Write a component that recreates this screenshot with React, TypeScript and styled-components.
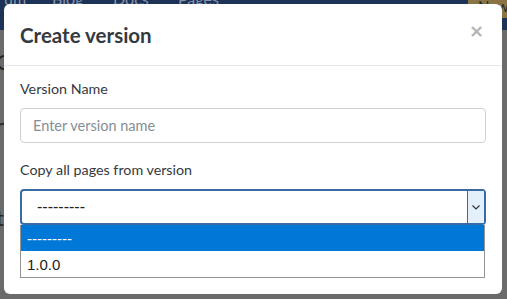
import React from "react";
import styled, { createGlobalStyle } from "styled-components";

const Global = createGlobalStyle`
  html, body { margin: 0; padding: 0; }
  body {
    width: 507px;
    height: 299px;
    overflow: hidden;
    background: #6b6b6b;
    font-family: Lato, "Open Sans", sans-serif;
  }
`;

const Page = styled.div`
  position: relative;
  width: 507px;
  height: 299px;
  background: #6b6b6b;
  overflow: hidden;
`;

const Navbar = styled.div`
  height: 30px;
  background: #1d3257;
  display: flex;
  align-items: flex-start;
  overflow: hidden;
`;

const NavLink = styled.span<{ $w: number }>`
  width: ${(p) => p.$w}px;
  flex: none;
  margin-top: -11px;
  font-size: 16px;
  line-height: 20px;
  color: #8794aa;
`;

const NavSpacer = styled.div`
  flex: 1;
`;

const NewButton = styled.div`
  width: 39px;
  height: 18px;
  box-sizing: border-box;
  background: #8a7446;
  color: #2a2a2a;
  font-size: 15px;
  line-height: 12px;
  overflow: hidden;
  white-space: nowrap;
  padding-left: 10px;
`;

const PageBody = styled.div`
  display: flex;
  flex-direction: column;
  font-size: 22px;
  color: #262626;
  margin-left: -4px;
`;

const PageLine = styled.div<{ $h: number }>`
  height: ${(p) => p.$h}px;
  line-height: ${(p) => p.$h}px;
`;

const Modal = styled.div`
  position: absolute;
  left: 4px;
  top: 4px;
  width: 498px;
  height: 290px;
  background: #fff;
  border-radius: 6px;
  display: flex;
  flex-direction: column;
`;

const Header = styled.div`
  height: 62px;
  box-sizing: border-box;
  border-bottom: 1px solid #e6e8eb;
  padding: 0 18px 0 16px;
  display: flex;
  align-items: center;
  justify-content: space-between;
`;

const Title = styled.h5`
  margin: 0;
  font-size: 20.5px;
  font-weight: 700;
  color: #343a40;
`;

const Close = styled.span`
  font-family: "DejaVu Sans", sans-serif;
  font-size: 18px;
  font-weight: 700;
  color: #b3b3b3;
  margin-top: -8px;
`;

const Body = styled.div`
  padding: 13px 16px 0 16px;
  display: flex;
  flex-direction: column;
  gap: 17px;
`;

const Group = styled.div`
  display: flex;
  flex-direction: column;
`;

const Label = styled.label`
  font-size: 14.3px;
  line-height: 20px;
  color: #343a40;
  margin-bottom: 9px;
`;

const Input = styled.input`
  box-sizing: border-box;
  width: 466px;
  height: 35px;
  border: 1px solid #cdd1d5;
  border-radius: 4px;
  padding: 0 12px;
  font-family: Lato, "Open Sans", sans-serif;
  font-size: 14.5px;
  color: #495057;
  outline: none;
  &::placeholder {
    color: #868e96;
  }
`;

const SelectBox = styled.div`
  position: relative;
  box-sizing: border-box;
  width: 466px;
  height: 36px;
  border: 2px solid #3a6aa6;
  border-radius: 4px;
  display: flex;
  align-items: stretch;
`;

const SelectValue = styled.div`
  flex: 1;
  padding-left: 15px;
  display: flex;
  align-items: center;
  font-family: "Liberation Sans", Arial, sans-serif;
  font-size: 16px;
  color: #222;
`;

const Arrow = styled.div`
  width: 16px;
  background: #e3effb;
  border-left: 1px solid #3a6aa6;
  display: flex;
  align-items: center;
  justify-content: center;
`;

const Menu = styled.ul`
  position: absolute;
  left: -2px;
  top: 34px;
  margin: 0;
  padding: 0;
  list-style: none;
  width: 465px;
  box-sizing: border-box;
  border: 1px solid #939393;
  border-top: none;
  background: #fff;
  z-index: 2;
`;

const Option = styled.li<{ $active?: boolean }>`
  height: 26px;
  padding-left: 6px;
  display: flex;
  align-items: center;
  font-family: "Liberation Sans", Arial, sans-serif;
  font-size: 15px;
  background: ${(p) => (p.$active ? "#0078d7" : "#fff")};
  color: ${(p) => (p.$active ? "#fff" : "#222")};
`;

export default function App() {
  return (
    <>
      <Global />
      <Page>
        <Navbar>
          <NavLink $w={52}>&nbsp;um</NavLink>
          <NavLink $w={61}>Blog</NavLink>
          <NavLink $w={65}>Docs</NavLink>
          <NavLink $w={60}>Pages</NavLink>
          <NavSpacer />
          <NewButton>New</NewButton>
        </Navbar>
        <PageBody>
          <PageLine $h={64}>C</PageLine>
          <PageLine $h={64}>n</PageLine>
          <PageLine $h={120}>t</PageLine>
        </PageBody>
        <Modal>
          <Header>
            <Title>Create version</Title>
            <Close>×</Close>
          </Header>
          <Body>
            <Group>
              <Label>Version Name</Label>
              <Input placeholder="Enter version name" />
            </Group>
            <Group>
              <Label>Copy all pages from version</Label>
              <SelectBox>
                <SelectValue>---------</SelectValue>
                <Arrow>
                  <svg width="8" height="5" viewBox="0 0 8 5">
                    <path d="M0.5 0.5 L4 4 L7.5 0.5" fill="none" stroke="#333" strokeWidth="1.2" />
                  </svg>
                </Arrow>
                <Menu>
                  <Option $active>---------</Option>
                  <Option>1.0.0</Option>
                </Menu>
              </SelectBox>
            </Group>
          </Body>
        </Modal>
      </Page>
    </>
  );
}
